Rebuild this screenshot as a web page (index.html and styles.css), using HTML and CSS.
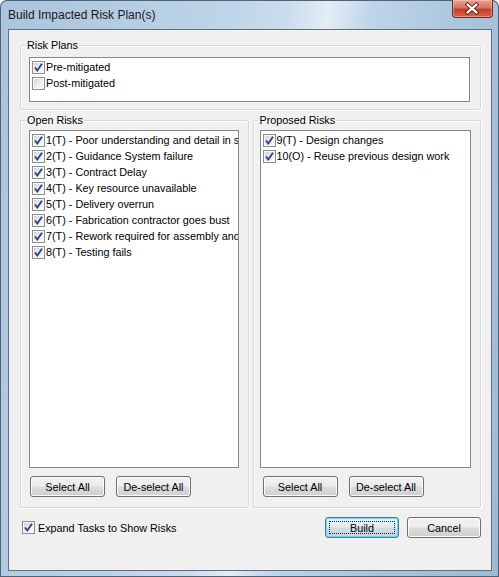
FILE: index.html
```html
<!DOCTYPE html>
<html lang="en">
<head>
    <meta charset="utf-8">
    <title>Build Impacted Risk Plan(s)</title>
    <link rel="stylesheet" href="styles.css">
</head>
<body>
<div class="window">
    <div class="titlebar">
        <span class="title">Build Impacted Risk Plan(s)</span>
        <span class="close">
            <svg width="41" height="18" viewBox="0 0 41 18">
                <path d="M16 4.5 L25 12.5 M25 4.5 L16 12.5" stroke="#5a1c12" stroke-width="4" stroke-linecap="square"/>
                <path d="M16 4.5 L25 12.5 M25 4.5 L16 12.5" stroke="#ffffff" stroke-width="2.2" stroke-linecap="square"/>
            </svg>
        </span>
    </div>
    <div class="client">
        <fieldset class="group plans">
            <legend>Risk Plans</legend>
            <div class="group-body">
                <div class="list list-plans">
                    <div class="row"><span class="cb"><svg width="11" height="11" viewBox="0 0 11 11"><path d="M2 5.5 L4.3 8.5 L9 1.8" class="tick"/></svg></span>Pre-mitigated</div>
                    <div class="row"><span class="cb"></span>Post-mitigated</div>
                </div>
            </div>
        </fieldset>

        <div class="columns">
            <fieldset class="group risks open">
                <legend>Open Risks</legend>
                <div class="group-body">
                    <div class="list list-risks">
                        <div class="row"><span class="cb"><svg width="11" height="11" viewBox="0 0 11 11"><path d="M2 5.5 L4.3 8.5 L9 1.8" class="tick"/></svg></span>1(T) - Poor understanding and detail in scope</div>
                        <div class="row"><span class="cb"><svg width="11" height="11" viewBox="0 0 11 11"><path d="M2 5.5 L4.3 8.5 L9 1.8" class="tick"/></svg></span>2(T) - Guidance System failure</div>
                        <div class="row"><span class="cb"><svg width="11" height="11" viewBox="0 0 11 11"><path d="M2 5.5 L4.3 8.5 L9 1.8" class="tick"/></svg></span>3(T) - Contract Delay</div>
                        <div class="row"><span class="cb"><svg width="11" height="11" viewBox="0 0 11 11"><path d="M2 5.5 L4.3 8.5 L9 1.8" class="tick"/></svg></span>4(T) - Key resource unavailable</div>
                        <div class="row"><span class="cb"><svg width="11" height="11" viewBox="0 0 11 11"><path d="M2 5.5 L4.3 8.5 L9 1.8" class="tick"/></svg></span>5(T) - Delivery overrun</div>
                        <div class="row"><span class="cb"><svg width="11" height="11" viewBox="0 0 11 11"><path d="M2 5.5 L4.3 8.5 L9 1.8" class="tick"/></svg></span>6(T) - Fabrication contractor goes bust</div>
                        <div class="row"><span class="cb"><svg width="11" height="11" viewBox="0 0 11 11"><path d="M2 5.5 L4.3 8.5 L9 1.8" class="tick"/></svg></span>7(T) - Rework required for assembly and test</div>
                        <div class="row"><span class="cb"><svg width="11" height="11" viewBox="0 0 11 11"><path d="M2 5.5 L4.3 8.5 L9 1.8" class="tick"/></svg></span>8(T) - Testing fails</div>
                    </div>
                    <div class="buttons">
                        <button class="btn">Select All</button>
                        <button class="btn">De-select All</button>
                    </div>
                </div>
            </fieldset>

            <fieldset class="group risks proposed">
                <legend>Proposed Risks</legend>
                <div class="group-body">
                    <div class="list list-risks">
                        <div class="row"><span class="cb"><svg width="11" height="11" viewBox="0 0 11 11"><path d="M2 5.5 L4.3 8.5 L9 1.8" class="tick"/></svg></span>9(T) - Design changes</div>
                        <div class="row"><span class="cb"><svg width="11" height="11" viewBox="0 0 11 11"><path d="M2 5.5 L4.3 8.5 L9 1.8" class="tick"/></svg></span>10(O) - Reuse previous design work</div>
                    </div>
                    <div class="buttons">
                        <button class="btn">Select All</button>
                        <button class="btn">De-select All</button>
                    </div>
                </div>
            </fieldset>
        </div>

        <div class="footer">
            <div class="row expand"><span class="cb"><svg width="11" height="11" viewBox="0 0 11 11"><path d="M2 5.5 L4.3 8.5 L9 1.8" class="tick"/></svg></span>Expand Tasks to Show Risks</div>
            <div class="actions">
                <button class="btn default"><span class="focus">Build</span></button>
                <button class="btn">Cancel</button>
            </div>
        </div>
    </div>
</div>
</body>
</html>
```

FILE: styles.css
```css
html, body {
    margin: 0;
    padding: 0;
}
body {
    font-family: "Liberation Sans", Arial, sans-serif;
    font-size: 10.8px;
    color: #000;
    background: #fff;
}
.window {
    width: 499px;
    height: 577px;
    box-sizing: border-box;
    padding: 0 7px 6px 8px;
    display: flex;
    flex-direction: column;
    border-radius: 7px 7px 0 0;
    background: linear-gradient(100deg, #a9c4dc 0%, #bcd3e6 35%, #c9dcec 48%, #e4edf5 55%, #bfd5e8 62%, #a8c3db 80%, #9dbad5 100%);
    box-shadow: inset 0 0 0 1px #4e6478;
}

/* title bar */
.titlebar {
    height: 29px;
    display: flex;
    justify-content: space-between;
    align-items: flex-start;
}
.title {
    font-size: 12px;
    padding-top: 8px;
    color: #1a1a1a;
}
.close {
    width: 41px;
    height: 18px;
    box-sizing: border-box;
    border: 1px solid #6d2b20;
    border-top: none;
    border-radius: 0 0 4px 4px;
    margin-right: -1px;
    background: linear-gradient(#e8a493 0%, #d8735c 45%, #c23e25 55%, #d2654a 100%);
    box-shadow: inset 0 0 0 1px rgba(255, 210, 200, .45);
    display: flex;
}
.close svg {
    margin-left: -1px;
}

/* dialog body */
.client {
    flex: 1;
    background: #f0f0f0;
    border: 1px solid #5f6f80;
    display: flex;
    flex-direction: column;
}

.group {
    margin: 0;
    padding: 0;
    min-width: 0;
    border: 1px solid #d5d9dd;
    border-radius: 2px;
    box-shadow: inset 1px 1px 0 #fff, 1px 1px 0 #fff;
}
.group legend {
    margin-left: 5px;
    padding: 0 1px;
    line-height: 13px;
}
.group-body {
    padding: 5px 10px 7px 8px;
}
.plans {
    margin: 9px 10px 0 11px;
}

.list {
    background: #fff;
    border: 1px solid #828790;
    padding: 1px 0;
    overflow: hidden;
}
.list-plans {
    height: 41px;
}
.list-risks {
    height: 334px;
}

.row {
    height: 16px;
    display: flex;
    align-items: center;
    white-space: nowrap;
    padding-left: 2px;
}
.cb {
    flex: none;
    width: 13px;
    height: 13px;
    box-sizing: border-box;
    margin-right: 1px;
    border: 1px solid #8f8f8f;
    background: linear-gradient(135deg, #cdd1d6 0%, #eef0f2 60%, #fbfbfb 100%);
    box-shadow: inset 0 0 0 1px #f6f6f6;
    display: flex;
}
.tick {
    fill: none;
    stroke: #2e4286;
    stroke-width: 1.9;
}

.columns {
    display: flex;
    gap: 4px;
    margin: 4px 10px 0 11px;
}
.risks {
    flex: 1;
}
.risks .group-body {
    padding: 3px 9px 10px 8px;
}
.proposed .group-body {
    padding-left: 6px;
}

.buttons {
    display: flex;
    gap: 11px;
    margin-top: 8px;
    padding-left: 1px;
}
.proposed .buttons {
    padding-left: 3px;
}

.btn {
    width: 75px;
    height: 21px;
    padding: 0;
    font-family: "Liberation Sans", Arial, sans-serif;
    font-size: 10.8px;
    color: #000;
    border: 1px solid #707070;
    border-radius: 3px;
    background: linear-gradient(#f2f2f2 0%, #ebebeb 48%, #dddddd 52%, #cfcfcf 100%);
    box-shadow: inset 0 0 0 1px #fafafa;
}
.btn.default {
    border-color: #3c7fb1;
    box-shadow: inset 0 0 0 1px #6ed4f8;
    background: linear-gradient(#eef3f6 0%, #e4ebf0 48%, #d3dde4 52%, #c8d4dc 100%);
    padding: 3px;
    display: flex;
}
.focus {
    flex: 1;
    border: 1px dotted #222;
    display: flex;
    align-items: center;
    justify-content: center;
}

.footer {
    display: flex;
    justify-content: space-between;
    align-items: center;
    margin: 9px 10px 0 13px;
}
.expand {
    padding-left: 0;
}
.expand .cb {
    margin-right: 3px;
}
.actions {
    display: flex;
    gap: 8px;
}
.actions .btn {
    width: 74px;
}
```
